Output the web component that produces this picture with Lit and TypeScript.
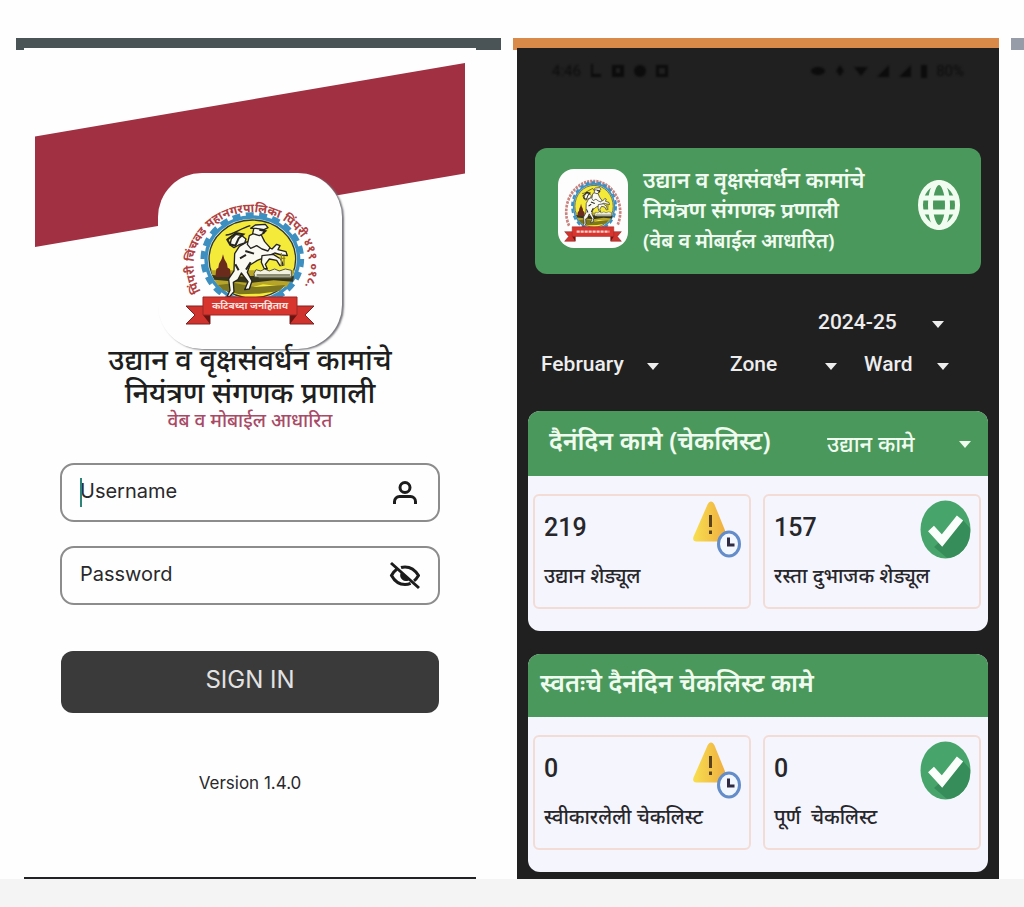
import { LitElement, html, svg, css } from "lit";
import { customElement, property } from "lit/decorators.js";

/* Municipal emblem: gear ring, horseman scene and ribbon with the motto. */
@customElement("civic-emblem")
class CivicEmblem extends LitElement {
  @property({ type: Boolean }) compact = false;

  static styles = css`
    :host { display: block; }
    svg { display: block; width: 100%; height: 100%; }
    .ring { font: 700 12px "Noto Sans", "Noto Sans Devanagari", sans-serif; fill: #b0413f; }
    .motto { font: 700 10px "Noto Sans", "Noto Sans Devanagari", sans-serif; fill: #fbe3df; }
  `;

  private art() {
    return svg`
      <g transform="translate(32 22) scale(0.3333)">
        <ellipse cx="187" cy="192" rx="149" ry="134" fill="none" stroke="#3d8fc0" stroke-width="13" stroke-dasharray="24 16.4"/>
        <ellipse cx="187" cy="192" rx="139" ry="126" fill="#d9eef2" stroke="#3d8fc0" stroke-width="10"/>
        <ellipse cx="187" cy="192" rx="130" ry="117" fill="#f4ea3a" stroke="#33382a" stroke-width="4"/>
        <path d="M63 226h250c-4 20-12 36-24 50l-70-8-60 16-74-12c-12-14-19-30-22-46z" fill="#b7a52a"/>
        <path d="M66 240l60 6 70-4 116 2-3 16-58-4-70 8-108-10z" fill="#34351b"/>
        <path d="M84 270l50-6 60 12 92-6-18 18-60 8-60 2-48-12z" fill="#7d761f"/>
        <path d="M76 246l3-24 6-4 2-12 8-14 4-14 4 14 8 14 2 12 7 4 3 24z" fill="#6a2b1c"/>
        <path d="M192 236l6-12 14 4 12-6 14 6 16-6 14 6 18-6 18 4v20H194z" fill="#f2f1df" stroke="#55563f" stroke-width="3"/>
        <path d="M200 240h100M206 248h98" stroke="#6d6e52" stroke-width="4"/>
        <path d="M107 120c18 2 44-20 74-28" fill="none" stroke="#25241f" stroke-width="4"/>
        <g fill="#faf9f2" stroke="#25241f" stroke-width="4" stroke-linejoin="round">
          <path d="M134 176l14-22 24-14 30 0 18 10 26 12 14-14 10 4-6 12 24 6 4 12-18-2-20-6-22 10-30 12-22 14-8 22 14 26-8 24-14 2 10-24-20-26-10 20-14 8 2 28-14 16-6-2 8-18-4-34 16-24z"/>
          <path d="M124 132l14-14 18 4 12 10-4 12-18 6-14 8-12-8z"/>
          <path d="M172 148l6-26 16-8 20 6 10 20 16 18-6 10-18-6-16-10-18 8z"/>
          <path d="M188 116l4-18 18-6 14 6-2 16-14 8z"/>
          <path d="M182 100l14-10 30-2 8 10-12 6-24-4z"/>
          <path d="M216 182l34-4 22 14 8 18-10 2-10-16-22-4-12 16 6 14-10-2-8-18z"/>
        </g>
        <path d="M112 134l26-20 22 4-14 12-10 22-16-4zM208 104l18 4-8 8M166 168l26 8M150 190l18-10M136 208l10 18M182 202l-14 22" fill="none" stroke="#25241f" stroke-width="6"/>
        <path d="M274 174v40M282 182v30M268 190h18" stroke="#8e8430" stroke-width="4"/>
      </g>
      <path d="M28 133h24v18H28l9-9zM156 133h-24v18h24l-9-9z" fill="#d0332d" stroke="#7d2220" stroke-width="1"/>
      <path d="M45 142l7 9v-9zM139 142l-7 9v-9z" fill="#6b1512"/>
      <path d="M45 124h94v18H45z" fill="#d8352f" stroke="#9c2623" stroke-width="1"/>`;
  }

  render() {
    return this.compact
      ? html`<svg viewBox="22 24 140 132" preserveAspectRatio="none" role="img" aria-label="PCMC">
          <path d="M38 122A61 57 0 1 1 148 120" fill="none" stroke="#c98480" stroke-width="6" stroke-dasharray="5 2"/>
          ${this.art()}
          <path d="M55 133h74" stroke="#f5cfca" stroke-width="4" stroke-dasharray="7 2"/>
        </svg>`
      : html`<svg viewBox="0 0 184 176" role="img" aria-label="PCMC">
          <defs><path id="arc" d="M43 118A58 53 0 1 1 143 120"/></defs>
          ${this.art()}
          <text class="ring"><textPath href="#arc">पिंपरी चिंचवड महानगरपालिका पिंपरी ४११ ०१८.</textPath></text>
          <text class="motto" x="92" y="136" text-anchor="middle">कटिबध्दा जनहिताय</text>
        </svg>`;
  }
}

@customElement("login-screen")
class LoginScreen extends LitElement {
  static styles = css`
    * { box-sizing: border-box; }
    :host { display: block; background: linear-gradient(#4a5356 12px, #fefefe 12px); padding: 10px 0 0; }
    .wrap { padding: 0 25px 0 8px; }
    .screen { display: flex; flex-direction: column; background: #fefefe; padding: 15px 11px 0; min-height: 831px; border-bottom: 2px solid #222226; font-family: Inter, sans-serif; color: #29292b; }
    .ribbon { height: 184px; background: #a03042; clip-path: polygon(0 40%, 100% 0, 100% 60%, 0 100%); }
    .badge { position: relative; align-self: center; width: 184px; height: 176px; margin-top: -74px; border-radius: 44px; background: #fefefe; box-shadow: 2px 1px 2px #77777c; }
    h1 { position: relative; margin: -7px 0 0; text-align: center; font: 500 29px/33px "Noto Sans", "Noto Sans Devanagari", sans-serif; color: #1e1e20; }
    .sub { margin: 0; text-align: center; font: 500 19px/24px "Noto Sans", "Noto Sans Devanagari", sans-serif; color: #a84a66; }
    form { display: flex; flex-direction: column; gap: 24px; padding: 31px 25px 0; }
    .field { position: relative; display: flex; align-items: center; height: 59px; border: 2px solid #8c8c8c; border-radius: 14px; padding: 0 18px; }
    .field input { flex: 1; min-width: 0; border: 0; outline: 0; padding: 0 0 4px; background: none; font: 400 20px/24px Inter, sans-serif; color: #29292b; }
    .field input::placeholder { color: #29292b; opacity: 1; }
    .caret { position: absolute; left: 18px; top: 13px; width: 2px; height: 29px; background: #2c8576; }
    .field svg { width: 32px; height: 32px; flex: none; fill: none; stroke: #1c1c1c; stroke-width: 3; }
    button { height: 62px; margin: 22px 1px 0; border: 0; border-radius: 12px; padding: 0 0 4px; background: #3a3a3a; color: #e2e2e2; font: 400 24px/28px Inter, sans-serif; }
    .version { margin: 58px 0 0; text-align: center; font-size: 17px; line-height: 24px; }
  `;

  render() {
    return html`
      <div class="wrap"><main class="screen">
        <div class="ribbon"></div>
        <civic-emblem class="badge"></civic-emblem>
        <h1>उद्यान व वृक्षसंवर्धन कामांचे<br />नियंत्रण संगणक प्रणाली</h1>
        <p class="sub">वेब व मोबाईल आधारित</p>
        <form @submit=${(e: Event) => e.preventDefault()}>
          <label class="field">
            <input type="text" placeholder="Username" aria-label="Username" />
            <span class="caret"></span>
            <svg viewBox="0 0 32 32"><circle cx="17" cy="10.500" r="5"/><path d="M6.500 27v-2.500a5 5 0 0 1 5-5h11a5 5 0 0 1 5 5V27"/></svg>
          </label>
          <label class="field">
            <input type="password" placeholder="Password" aria-label="Password" />
            <svg viewBox="0 0 32 32"><path d="M13 7.500c1.300-.4 2.600-.6 4-.6 6 0 10.500 3.600 13.500 8.600-1.300 2.200-2.700 4-4.500 5.400M8.500 9.500C6.400 11 4.700 13 3.500 15.500c3 5.500 7.500 9 13.500 9 2 0 3.900-.4 5.600-1.200M3 3l28 25"/><path d="M13.500 13a5 5 0 0 0 7 6.500z" fill="#1c1c1c" stroke-width="1.500"/></svg>
          </label>
          <button type="submit">SIGN IN</button>
        </form>
        <p class="version">Version 1.4.0</p>
      </main></div>`;
  }
}

type Tile = { value: string; label: string; icon: "pending" | "done" };

@customElement("dashboard-screen")
class DashboardScreen extends LitElement {
  static styles = css`
    * { box-sizing: border-box; }
    :host { display: block; background: linear-gradient(#d98a49 12px, #fefefe 12px); padding: 10px 0 0 4px; font-family: Roboto, "Noto Sans", "Noto Sans Devanagari", sans-serif; }
    .screen { min-height: 831px; background: #202020; padding: 12px 11px 7px; }
    .status { display: flex; justify-content: space-between; align-items: center; height: 22px; padding: 0 24px; color: #0c0c0c; font-size: 15px; filter: blur(1px); }
    .status div { display: flex; align-items: center; gap: 8px; }
    .status svg { height: 14px; fill: #0c0c0c; }
    .hero { display: flex; align-items: center; gap: 15px; height: 126px; margin: 66px 7px 0; padding: 0 21px 0 23px; border-radius: 12px; background: #4b985c; color: #f1fbf1; }
    .badge { width: 70px; height: 79px; flex: none; padding: 4px; border-radius: 16px; background: #fdfdfd; margin-bottom: 6px; }
    .hero h2 { flex: 1; margin: 0; padding-bottom: 2px; font: 600 22px/30px "Noto Sans", "Noto Sans Devanagari", sans-serif; white-space: nowrap; }
    .hero small { font-size: 20px; }
    .globe { width: 42px; height: 50px; flex: none; margin-bottom: 12px; }
    .filters { display: grid; grid-template-columns: 189px 134px 1fr; padding: 28px 13px 0; row-gap: 2px; }
    .pick { display: flex; align-items: center; height: 40px; color: #ededed; }
    .pick select { appearance: none; border: 0; padding: 0; margin: 0; background: none; color: inherit; font: 500 21px/28px Roboto, sans-serif; }
    .pick svg, .head svg { width: 12px; height: 7px; flex: none; fill: currentColor; margin-top: 4px; }
    .year { grid-column: 1 / -1; justify-self: end; margin-right: 31px; }
    .year select { width: 114px; }
    .month select { width: 106px; }
    .zone select { width: 95px; }
    .ward select { width: 73px; }
    .card { border-radius: 12px; overflow: hidden; background: #f5f5fd; }
    .filters + .card { margin-top: 27px; }
    .card + .card { margin-top: 23px; }
    .head { display: flex; align-items: center; justify-content: space-between; height: 63px; padding: 0 17px 8px 12px; background: #4b985c; color: #effbef; }
    .inset { height: 65px; padding-left: 21px; }
    .head h3 { margin: 0; font: 600 25px/30px "Noto Sans", "Noto Sans Devanagari", sans-serif; }
    .kind { display: flex; align-items: center; padding-top: 6px; }
    .kind select { appearance: none; width: 132px; border: 0; padding: 0; background: none; color: inherit; font: 500 22px/30px "Noto Sans", "Noto Sans Devanagari", sans-serif; }
    .tiles { display: grid; grid-template-columns: 1fr 1fr; gap: 12px; padding: 18px 7px 22px 5px; }
    .tile { position: relative; height: 115px; border: 2px solid #f3dcd5; border-radius: 6px; padding: 15px 9px; color: #27272b; }
    .value { margin: 0; font: 500 25px/34px Roboto, sans-serif; }
    .name { margin: 16px 0 0; font: 500 20px/30px "Noto Sans", "Noto Sans Devanagari", sans-serif; white-space: pre; }
    .icon { position: absolute; top: 4px; right: 8px; width: 51px; height: 59px; }
  `;

  private caret = html`<svg viewBox="0 0 12 7"><path d="M0 0h12L6 7z"/></svg>`;

  private pick(cls: string, label: string, value: string) {
    return html`<label class="pick ${cls}"><select aria-label=${label}><option>${value}</option></select>${this.caret}</label>`;
  }

  private icon(kind: Tile["icon"]) {
    return kind === "done"
      ? html`<svg class="icon" viewBox="0 0 51 59">
          <ellipse cx="25.500" cy="29.500" rx="25" ry="29" fill="#47a56c"/>
          <path d="M47 45A25 29 0 0 1 27 58L14 47 43 20l7 8a30 30 0 0 1-3 17z" fill="#368d59"/>
          <path d="M11 28.500l11 12L40 18" fill="none" stroke="#fbfffb" stroke-width="8"/>
        </svg>`
      : html`<svg class="icon" viewBox="0 0 51 59">
          <defs><linearGradient id="amber"><stop offset="0" stop-color="#f8df50"/><stop offset="1" stop-color="#eeaa3f"/></linearGradient></defs>
          <path d="M17.500 4.500c2-4 5-4 7 0l13 32c1 3 0 5-3 5h-28c-3 0-4-2-3-5z" fill="url(#amber)"/>
          <path d="M20.500 15v12M20.500 30.500v3.500" stroke="#584020" stroke-width="3"/>
          <ellipse cx="39" cy="44" rx="10.500" ry="12" fill="#f3f7ff" stroke="#638cc9" stroke-width="3"/>
          <path d="M38.500 37.500v7.500h6" fill="none" stroke="#302b42" stroke-width="3"/>
        </svg>`;
  }

  private tiles(items: Tile[]) {
    return html`<div class="tiles">${items.map(
      (t) => html`<article class="tile"><p class="value">${t.value}</p><p class="name">${t.label}</p>${this.icon(t.icon)}</article>`
    )}</div>`;
  }

  render() {
    return html`<main class="screen">
      <div class="status">
        <div><span>4:46</span>
          <svg viewBox="0 0 14 14"><path d="M2 0h2v10h8v3H2z"/></svg>
          <svg viewBox="0 0 14 14"><path fill-rule="evenodd" d="M1 1h12v12H1zM5 4v5h4V4z"/></svg>
          <svg viewBox="0 0 14 14"><circle cx="7" cy="7" r="6"/></svg>
          <svg viewBox="0 0 14 14"><path fill-rule="evenodd" d="M1 1h12v12H1zM4 4v6h6V4z"/></svg>
        </div>
        <div>
          <svg viewBox="0 0 16 14"><ellipse cx="8" cy="7" rx="7" ry="4"/></svg>
          <svg viewBox="0 0 12 14"><path d="M6 1l4 6-4 5-4-5z"/></svg>
          <svg viewBox="0 0 14 14"><path d="M0 3h14L7 12z"/></svg>
          <svg viewBox="0 0 14 14"><path d="M13 1v12H1z"/></svg>
          <svg viewBox="0 0 14 14"><path d="M13 1v12H1z"/></svg>
          <svg viewBox="0 0 8 14"><path d="M1 1h6v13H1z"/></svg>
          <span>80%</span>
        </div>
      </div>
      <header class="hero">
        <civic-emblem class="badge" compact></civic-emblem>
        <h2>उद्यान व वृक्षसंवर्धन कामांचे<br />नियंत्रण संगणक प्रणाली<br /><small>(वेब व मोबाईल आधारित)</small></h2>
        <svg class="globe" viewBox="0 0 42 50" fill="none" stroke="#effcef" stroke-width="5">
          <ellipse cx="21" cy="25" rx="18.500" ry="22.500"/><ellipse cx="21" cy="25" rx="8.500" ry="22.500"/><path d="M4 18h34M4 32h34"/>
        </svg>
      </header>
      <div class="filters">
        ${this.pick("year", "Year", "2024-25")}
        ${this.pick("month", "Month", "February")}
        ${this.pick("zone", "Zone", "Zone")}
        ${this.pick("ward", "Ward", "Ward")}
      </div>
      <section class="card">
        <div class="head inset">
          <h3>दैनंदिन कामे (चेकलिस्ट)</h3>
          <label class="kind"><select aria-label="कामे"><option>उद्यान कामे</option></select>${this.caret}</label>
        </div>
        ${this.tiles([
          { value: "219", label: "उद्यान शेड्यूल", icon: "pending" },
          { value: "157", label: "रस्ता दुभाजक शेड्यूल", icon: "done" },
        ])}
      </section>
      <section class="card">
        <div class="head"><h3>स्वतःचे दैनंदिन चेकलिस्ट कामे</h3></div>
        ${this.tiles([
          { value: "0", label: "स्वीकारलेली चेकलिस्ट", icon: "pending" },
          { value: "0", label: "पूर्ण  चेकलिस्ट", icon: "done" },
        ])}
      </section>
    </main>`;
  }
}

@customElement("app-root")
class AppRoot extends LitElement {
  static styles = css`
    :host { display: block; min-height: 100vh; background: #f4f4f4; }
    .board { display: grid; grid-template-columns: minmax(0, 485fr) minmax(0, 486fr) minmax(0, 13fr); gap: 12px; padding: 38px 0 0 16px; background: #fefefe; }
    .next { height: 12px; background: #979da8; }
  `;

  render() {
    return html`<div class="board">
      <login-screen></login-screen>
      <dashboard-screen></dashboard-screen>
      <div class="next"></div>
    </div>`;
  }
}
